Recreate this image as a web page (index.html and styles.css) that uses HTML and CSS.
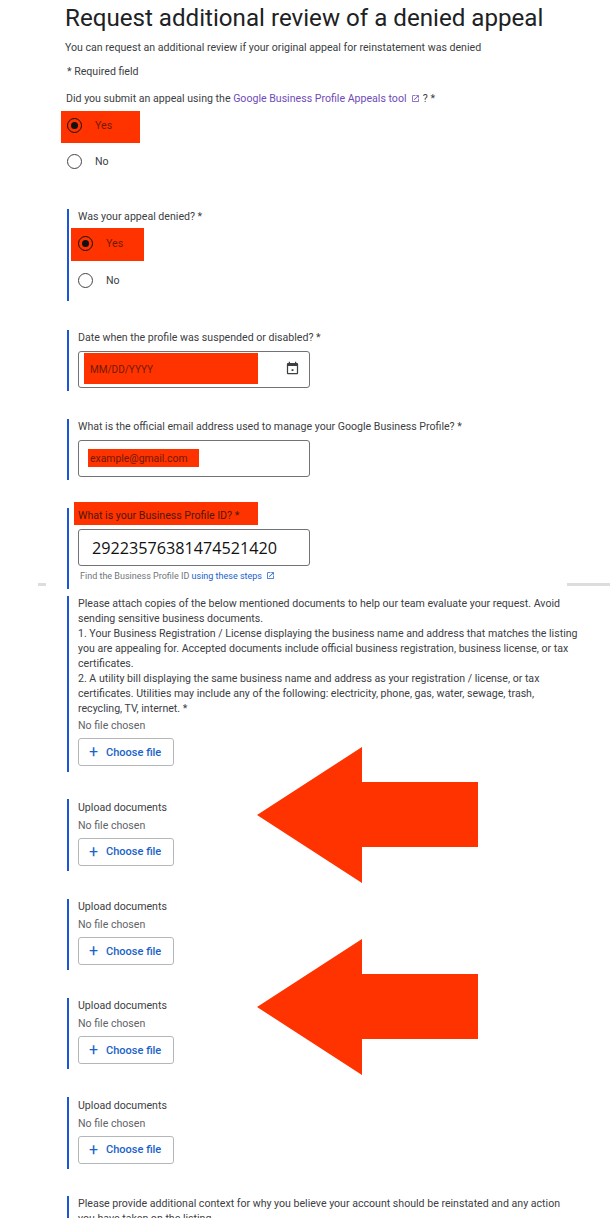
FILE: index.html
```html
<!DOCTYPE html>
<html lang="en">
<head>
    <meta charset="UTF-8">
    <meta name="viewport" content="width=device-width, initial-scale=1.0">
    <title>Request additional review of a denied appeal</title>
    <link rel="stylesheet" href="styles.css">
</head>
<body>
    <div class="page">
        <div class="rule rule-left"></div>
        <div class="rule rule-right"></div>

        <h1>Request additional review of a denied appeal</h1>
        <p class="intro">You can request an additional review if your original appeal for reinstatement was denied</p>
        <p class="required">* Required field</p>

        <div class="first-question">
            <p class="label">Did you submit an appeal using the <a class="visited" href="#">Google Business Profile Appeals tool <svg class="ext" viewBox="0 0 24 24"><path d="M19 19H5V5h7V3H5c-1.11 0-2 .9-2 2v14c0 1.1.89 2 2 2h14c1.1 0 2-.9 2-2v-7h-2v7zM14 3v2h3.59l-9.83 9.83 1.41 1.41L19 6.41V10h2V3h-7z"/></svg></a> ? *</p>
            <div class="radio-row marked mark-first"><span class="radio checked"></span><span>Yes</span></div>
            <div class="radio-row"><span class="radio"></span><span>No</span></div>
        </div>

        <div class="field field-radios">
            <p class="label">Was your appeal denied? *</p>
            <div class="radio-row marked mark-second"><span class="radio checked"></span><span>Yes</span></div>
            <div class="radio-row"><span class="radio"></span><span>No</span></div>
        </div>

        <div class="field field-date">
            <p class="label">Date when the profile was suspended or disabled? *</p>
            <div class="input">
                <span class="mark-date"></span>
                <span class="placeholder date-text">MM/DD/YYYY</span>
                <svg class="calendar" viewBox="0 0 24 24"><path d="M19 3h-1V1h-2v2H8V1H6v2H5c-1.1 0-2 .9-2 2v14c0 1.1.9 2 2 2h14c1.1 0 2-.9 2-2V5c0-1.1-.9-2-2-2zm0 16H5V8h14v11zm-8.5-6h3v3h-3z"/></svg>
            </div>
        </div>

        <div class="field field-email">
            <p class="label">What is the official email address used to manage your Google Business Profile? *</p>
            <div class="input">
                <span class="mark-email"></span>
                <span class="placeholder">example@gmail.com</span>
            </div>
        </div>

        <div class="field field-id">
            <p class="label marked-label">What is your Business Profile ID? *</p>
            <div class="input input-value">29223576381474521420</div>
            <p class="hint">Find the Business Profile ID <a href="#">using these steps <svg class="ext" viewBox="0 0 24 24"><path d="M19 19H5V5h7V3H5c-1.11 0-2 .9-2 2v14c0 1.1.89 2 2 2h14c1.1 0 2-.9 2-2v-7h-2v7zM14 3v2h3.59l-9.83 9.83 1.41 1.41L19 6.41V10h2V3h-7z"/></svg></a></p>
        </div>

        <div class="field field-docs">
            <p class="label">Please attach copies of the below mentioned documents to help our team evaluate your request. Avoid sending sensitive business documents.<br>
            1. Your Business Registration / License displaying the business name and address that matches the listing you are appealing for. Accepted documents include official business registration, business license, or tax certificates.<br>
            2. A utility bill displaying the same business name and address as your registration / license, or tax certificates. Utilities may include any of the following: electricity, phone, gas, water, sewage, trash, recycling, TV, internet. *</p>
            <p class="no-file no-file-first">No file chosen</p>
            <button class="choose"><span class="plus">+</span>Choose file</button>
        </div>

        <div class="field field-upload">
            <p class="label">Upload documents</p>
            <p class="no-file">No file chosen</p>
            <button class="choose"><span class="plus">+</span>Choose file</button>
        </div>

        <div class="field field-upload">
            <p class="label">Upload documents</p>
            <p class="no-file">No file chosen</p>
            <button class="choose"><span class="plus">+</span>Choose file</button>
        </div>

        <div class="field field-upload">
            <p class="label">Upload documents</p>
            <p class="no-file">No file chosen</p>
            <button class="choose"><span class="plus">+</span>Choose file</button>
        </div>

        <div class="field field-upload">
            <p class="label">Upload documents</p>
            <p class="no-file">No file chosen</p>
            <button class="choose"><span class="plus">+</span>Choose file</button>
        </div>

        <div class="field field-context">
            <p class="label">Please provide additional context for why you believe your account should be reinstated and any action you have taken on the listing.</p>
        </div>

        <svg class="arrow arrow-one" viewBox="0 0 221 136"><path d="M0 68 105 0V35H221V100H105V136z"/></svg>
        <svg class="arrow arrow-two" viewBox="0 0 221 136"><path d="M0 68 105 0V35H221V100H105V136z"/></svg>
    </div>
</body>
</html>
```

FILE: styles.css
```css
* {
    box-sizing: border-box;
}
body {
    margin: 0;
    background-color: #fff;
    font-family: Roboto, "Liberation Sans", sans-serif;
    color: #3c4043;
}
p {
    margin: 0;
}
a {
    color: #1a62c9;
    text-decoration: none;
}
a.visited {
    color: #6f4bb8;
}
.page {
    position: relative;
    width: 610px;
    height: 1218px;
    padding: 2px 0 0 65px;
    overflow: hidden;
}
.rule {
    position: absolute;
    top: 583px;
    height: 3px;
    background-color: #ddd;
}
.rule-left {
    left: 38px;
    width: 8px;
}
.rule-right {
    left: 567px;
    width: 43px;
}
h1 {
    margin: 0;
    font-family: Roboto, sans-serif;
    font-size: 24.15px;
    font-weight: 400;
    line-height: 32px;
    color: #202124;
}
.intro {
    margin-top: 6px;
    font-size: 10.6px;
    line-height: 16px;
}
.required {
    margin: 8px 0 0 2px;
    font-size: 10.6px;
    line-height: 16px;
}
.label {
    font-size: 10.6px;
    line-height: 15px;
    color: #3c4043;
}
.first-question {
    margin: 11px 0 0 2px;
    height: 102px;
}
.first-question .label {
    margin-left: -1px;
}
.radio-row {
    position: relative;
    display: flex;
    align-items: center;
    gap: 13px;
    height: 36px;
    font-size: 10.6px;
}
.radio-row > span {
    position: relative;
}
.first-question .radio-row:first-of-type {
    margin-top: 1.5px;
}
.radio {
    width: 15px;
    height: 15px;
    border: 1.5px solid #444;
    border-radius: 50%;
    background-color: #fff;
}
.radio.checked {
    border-color: #111;
    background-color: transparent;
}
.radio.checked::after {
    content: "";
    position: absolute;
    left: 2.5px;
    top: 2.5px;
    width: 7px;
    height: 7px;
    border-radius: 50%;
    background-color: #111;
}
.marked {
    color: #701a04;
}
.marked::before {
    content: "";
    position: absolute;
    background-color: #ff3300;
}
.mark-first::before {
    left: -6px;
    top: 3.5px;
    width: 79px;
    height: 32px;
}
.mark-second::before {
    left: -7px;
    top: 3px;
    width: 73px;
    height: 33px;
}
.field {
    border-left: 2px solid #1a56d6;
    padding-left: 9px;
    margin-left: 2px;
    position: relative;
}
.field-radios {
    margin-top: 16px;
    height: 92px;
}
.field-radios .label {
    margin-bottom: 2px;
}
.field-radios .radio-row {
    height: 37px;
    top: -1px;
}
.field-date {
    margin-top: 29px;
    height: 61px;
}
.field-email {
    margin-top: 28px;
    height: 61px;
}
.field-id {
    margin-top: 28px;
    height: 81px;
}
.field .label + .input {
    margin-top: 6px;
}
.input {
    position: relative;
    display: flex;
    align-items: center;
    width: 232px;
    height: 37px;
    padding-left: 11px;
    border: 1px solid #6f7276;
    border-radius: 3px;
    background-color: #fff;
    font-size: 10.4px;
}
.placeholder {
    position: relative;
    color: #701a04;
}
.mark-date,
.mark-email {
    position: absolute;
    background-color: #ff3300;
}
.mark-date {
    left: 5px;
    top: 1px;
    width: 174px;
    height: 31px;
}
.mark-email {
    left: 9px;
    top: 8px;
    width: 111px;
    height: 18px;
}
.date-text {
    font-size: 10px;
}
.calendar {
    position: absolute;
    right: 9px;
    top: 9px;
    width: 15px;
    height: 15px;
    fill: #3c4043;
}
.marked-label {
    display: block;
    position: relative;
    color: #4a1a0a;
    z-index: 0;
}
.marked-label::before {
    content: "";
    position: absolute;
    z-index: -1;
    left: -4px;
    top: -6px;
    width: 184px;
    height: 23px;
    background-color: #ff3300;
}
.input-value {
    font-family: "Open Sans", sans-serif;
    font-size: 16.2px;
    color: #111;
    padding-left: 13px;
}
.hint {
    margin: 4px 0 0 2px;
    font-size: 9px;
    line-height: 12px;
    color: #70757a;
}
.ext {
    width: 9px;
    height: 9px;
    margin-left: 2px;
    vertical-align: -1px;
    fill: currentColor;
}
.field-docs {
    margin-top: 7px;
    height: 175.5px;
}
.field-docs .label {
    width: 500px;
}
.field-upload {
    margin-top: 27.83px;
    height: 71.5px;
}
.field-upload .label {
    padding-top: 0.5px;
}
.no-file {
    margin-top: 3px;
    font-size: 10.6px;
    line-height: 15px;
    color: #5f6368;
}
.no-file-first {
    margin-top: 2px;
}
.choose {
    display: flex;
    align-items: center;
    width: 96px;
    height: 28px;
    margin-top: 5px;
    padding: 0 0 0 10px;
    border: 1px solid #b4b7ba;
    border-radius: 3px;
    background-color: #fff;
    font-family: Roboto, sans-serif;
    font-size: 11px;
    font-weight: 500;
    color: #1a62c9;
}
.plus {
    margin-right: 8px;
    font-size: 16px;
    font-weight: 400;
    line-height: 1;
}
.field-context {
    margin-top: 27.33px;
    height: 40px;
}
.field-context .label {
    width: 490px;
}
.arrow {
    position: absolute;
    left: 257px;
    width: 221px;
    height: 136px;
    fill: #ff3300;
}
.arrow-one {
    top: 747px;
}
.arrow-two {
    top: 939px;
}
```
